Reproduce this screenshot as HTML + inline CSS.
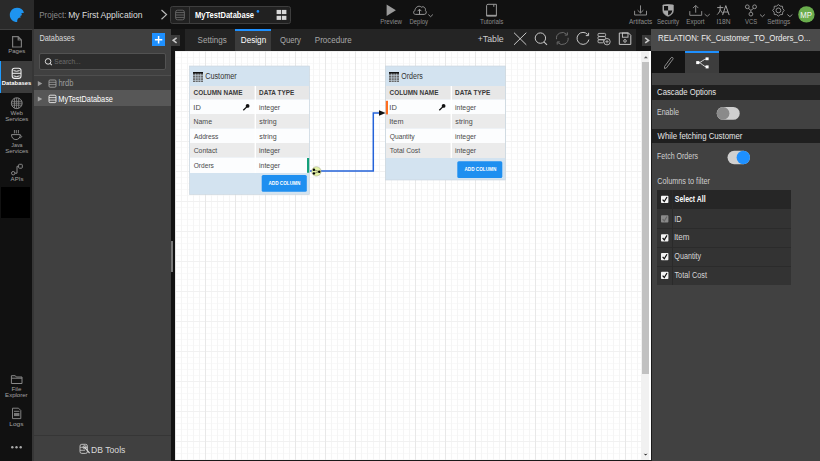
<!DOCTYPE html>
<html><head><meta charset="utf-8">
<title>Database Designer</title>
<style>
*{margin:0;padding:0;box-sizing:border-box}
html,body{width:820px;height:461px;overflow:hidden;background:#404040;font-family:"Liberation Sans",sans-serif;}
.a{position:absolute}
svg{position:absolute;left:0;top:0;font-family:"Liberation Sans",sans-serif}
.grid{background-color:#fff;
 background-image:linear-gradient(to right,#e8e8e8 1px,transparent 1px),linear-gradient(to bottom,#f1f1f1 1px,transparent 1px),linear-gradient(to right,#f5f5f5 1px,transparent 1px),linear-gradient(to bottom,#f9f9f9 1px,transparent 1px);
 background-size:30px 30px,30px 30px,6px 6px,6px 6px;background-position:0 0,0 0,0 0,0 0}
</style></head><body>
<!-- top header -->
<div class="a" style="left:0;top:0;width:820px;height:29px;background:#111"></div>
<div class="a" style="left:0;top:0;width:34px;height:29px;background:#2a2a2a"></div>
<!-- left icon bar -->
<div class="a" style="left:0;top:30px;width:32px;height:431px;background:#111"></div>
<div class="a" style="left:0;top:61px;width:32px;height:32px;background:#3c3c3c"></div>
<div class="a" style="left:0;top:61px;width:1px;height:32px;background:#1e9bff"></div>
<div class="a" style="left:1px;top:187px;width:29px;height:31px;background:#000"></div>
<!-- left panel -->
<div class="a" style="left:32px;top:29px;width:139px;height:432px;background:#404040;border-left:2px solid #363636"></div>
<div class="a" style="left:39px;top:53px;width:127px;height:17px;background:#2c2c2c;border:1px solid #525252;border-radius:2px"></div>
<div class="a" style="left:34px;top:75px;width:137px;height:1px;background:#4e4e4e"></div>
<div class="a" style="left:34px;top:76px;width:137px;height:14px;background:#3c3c3c"></div>
<div class="a" style="left:34px;top:90px;width:137px;height:16px;background:#575757"></div>
<div class="a" style="left:34px;top:435px;width:137px;height:1px;background:#363636"></div>
<div class="a" style="left:152px;top:33px;width:13px;height:13px;background:#1e90ff"></div>
<!-- splitter -->
<div class="a" style="left:171px;top:29px;width:4px;height:432px;background:#121212"></div>
<div class="a" style="left:171px;top:241px;width:2px;height:31px;background:#777"></div>
<!-- tab bar -->
<div class="a" style="left:171px;top:29px;width:480px;height:22px;background:#242424"></div>
<div class="a" style="left:171px;top:29px;width:14px;height:22px;background:#161616"></div>
<div class="a" style="left:171px;top:35px;width:9px;height:11px;background:#3a3a3a"></div>
<div class="a" style="left:235px;top:29px;width:36px;height:22px;background:#3b3b3b;border-top:2px solid #1e90ff"></div>
<div class="a" style="left:636px;top:29px;width:15px;height:22px;background:#161616"></div>
<div class="a" style="left:642px;top:35px;width:9px;height:11px;background:#3a3a3a"></div>
<!-- canvas -->
<div class="a grid" style="left:175px;top:51px;width:466px;height:410px"></div>
<div class="a" style="left:641px;top:51px;width:9px;height:410px;background:#f1f1f1"></div>
<div class="a" style="left:642px;top:62px;width:7px;height:312px;background:#c1c1c1"></div>
<div class="a" style="left:649px;top:51px;width:2px;height:410px;background:#fff"></div>
<div class="a" style="left:651px;top:51px;width:1px;height:410px;background:#1a1a1a"></div>
<div class="a" style="left:175px;top:460px;width:476px;height:1px;background:#1a1a1a"></div>
<!-- right panel -->
<div class="a" style="left:651px;top:29px;width:169px;height:22px;background:#4a4a4a"></div>
<div class="a" style="left:651px;top:51px;width:169px;height:22px;background:#141414"></div>
<div class="a" style="left:685px;top:51px;width:34px;height:22px;background:#3d3d3d;border-top:2px solid #1e90ff"></div>
<div class="a" style="left:652px;top:73px;width:168px;height:388px;background:#414141"></div>
<div class="a" style="left:652px;top:85px;width:168px;height:15px;background:#1f1f1f"></div>
<div class="a" style="left:652px;top:129px;width:168px;height:14px;background:#1f1f1f"></div>
<!-- filter table -->
<div class="a" style="left:657px;top:190px;width:134px;height:19px;background:#262626"></div>
<div class="a" style="left:657px;top:209px;width:134px;height:76px;background:#333"></div>
<div class="a" style="left:657px;top:228px;width:134px;height:1px;background:#2b2b2b"></div>
<div class="a" style="left:657px;top:247px;width:134px;height:1px;background:#2b2b2b"></div>
<div class="a" style="left:657px;top:266px;width:134px;height:1px;background:#2b2b2b"></div>
<div class="a" style="left:672px;top:190px;width:1px;height:95px;background:#2a2a2a"></div>

<svg width="820" height="461" viewBox="0 0 820 461">
<!-- ===== tables ===== -->
<g id="cust">
 <rect x="189.5" y="66" width="120" height="128.5" fill="#d3e3f0" stroke="#c9d4dc" stroke-width="0.6"/>
 <rect x="190" y="86" width="119" height="13.5" fill="#e7e7e7"/>
 <rect x="190" y="99.5" width="119" height="14.5" fill="#fff" fill-opacity="0.93"/>
 <rect x="190" y="114" width="119" height="14.5" fill="#ebebeb"/>
 <rect x="190" y="128.5" width="119" height="14.5" fill="#fff" fill-opacity="0.93"/>
 <rect x="190" y="143" width="119" height="14.5" fill="#ebebeb"/>
 <rect x="190" y="157.5" width="119" height="15.5" fill="#fff" fill-opacity="0.93"/>
 <rect x="254.6" y="86" width="1.4" height="87" fill="#fff"/>
 <rect x="261.7" y="175.1" width="45.1" height="16.6" rx="1.5" fill="#1e8ff0"/>
 <rect x="307" y="158" width="2.2" height="14.8" fill="#14a07a"/>
</g>
<g id="ord">
 <rect x="385.5" y="66" width="120" height="114" fill="#d3e3f0" stroke="#c9d4dc" stroke-width="0.6"/>
 <rect x="386" y="86" width="119" height="13.5" fill="#e7e7e7"/>
 <rect x="386" y="99.5" width="119" height="14.5" fill="#fff" fill-opacity="0.93"/>
 <rect x="386" y="114" width="119" height="14.5" fill="#ebebeb"/>
 <rect x="386" y="128.5" width="119" height="14.5" fill="#fff" fill-opacity="0.93"/>
 <rect x="386" y="143" width="119" height="15" fill="#ebebeb"/>
 <rect x="450.6" y="86" width="1.4" height="72" fill="#fff"/>
 <rect x="457.3" y="161.2" width="45" height="16.8" rx="1.5" fill="#1e8ff0"/>
 <rect x="385.8" y="100.8" width="2.2" height="13.6" fill="#ff6d1f"/>
</g>
<!-- table icons -->
<g>
 <rect x="193" y="72" width="10" height="10" fill="#666"/>
 <rect x="193" y="72" width="10" height="1.6" fill="#111"/>
 <path d="M193 75.3H203M193 77.9H203M193 80.4H203M195.6 73.6V82M198.1 73.6V82M200.6 73.6V82" stroke="#c4d2de" stroke-width="0.7"/>
 <rect x="389" y="72" width="10" height="10" fill="#666"/>
 <rect x="389" y="72" width="10" height="1.6" fill="#111"/>
 <path d="M389 75.3H399M389 77.9H399M389 80.4H399M391.6 73.6V82M394.1 73.6V82M396.6 73.6V82" stroke="#c4d2de" stroke-width="0.7"/>
 <!-- keys -->
 <circle cx="247.6" cy="105.9" r="1.9" fill="#111"/>
 <path d="M247 106.6L243.3 110.2" stroke="#111" stroke-width="1.3"/>
 <circle cx="443.6" cy="105.9" r="1.9" fill="#111"/>
 <path d="M443 106.6L439.3 110.2" stroke="#111" stroke-width="1.3"/>
</g>
<!-- relation line -->
<path d="M310 171.1H373.3V113H380" fill="none" stroke="#2563d9" stroke-width="1.5"/>
<path d="M379 110.2L385.6 113L379 115.8Z" fill="#111"/>
<circle cx="316.4" cy="171.4" r="4.7" fill="#e4f3a6" stroke="#9a9a8a" stroke-width="0.5"/>
<path d="M313.9 169.8L319.3 171.7L313.9 173.4" fill="none" stroke="#333" stroke-width="0.5"/>
<circle cx="313.9" cy="169.8" r="1.2" fill="#000"/>
<circle cx="313.9" cy="173.4" r="1.2" fill="#000"/>
<circle cx="319.3" cy="171.7" r="1.2" fill="#000"/>

<!-- ===== icons ===== -->
<!-- logo -->
<path d="M24 12.7C23 9.5 20.5 7.8 17 7.8C13 7.8 9.8 11 9.8 15C9.8 19 13 22.1 17.2 22.1C17.1 21 17.2 19.9 17.7 19.1C18.6 17.9 19.8 17.3 21 17.2C20.6 16.9 20.4 16.8 20.2 16.5C20.9 15.6 21.4 15.2 22.1 15.1C21.8 14.6 21.5 14.1 21.2 13.6C22 13 22.9 12.7 24 12.7Z" fill="#1e94f0"/>
<!-- pages -->
<path d="M12.6 36.6H18.2L21.4 40V47H12.6Z M18.2 36.6V40H21.4" fill="none" stroke="#7a7a7a" stroke-width="1.2"/>
<!-- databases -->
<rect x="12.2" y="68.2" width="8.8" height="10.2" rx="2.3" fill="none" stroke="#eeeeee" stroke-width="1.1"/>
<path d="M12.2 73.3H21M13.5 70.6Q16.6 71.9 19.7 70.6M13.5 75.9Q16.6 77.2 19.7 75.9" fill="none" stroke="#eeeeee" stroke-width="1"/>
<!-- globe -->
<circle cx="16.75" cy="103.2" r="5.4" fill="none" stroke="#888888" stroke-width="1"/>
<path d="M11.6 101.3H21.9M11.4 103.2H22.1M11.6 105.2H21.9M14.5 98.2V108.2M16.6 97.8V108.6M18.7 98.2V108.2" stroke="#888888" stroke-width="0.8"/>
<!-- java cup -->
<path d="M11.5 134.6H20.3C20.3 137.6 18.5 139.6 15.9 139.6C13.3 139.6 11.5 137.6 11.5 134.6Z M20.2 135.6C22.3 135.6 22.3 137.8 19.5 137.8" fill="none" stroke="#888888" stroke-width="1"/>
<path d="M14.4 130V133.4M16.3 130V133.4M18.4 130V133.4" stroke="#888888" stroke-width="0.9"/>
<!-- apis -->
<rect x="18.6" y="164.3" width="3.7" height="3.9" rx="0.8" fill="none" stroke="#888888" stroke-width="1"/>
<circle cx="13.2" cy="173.2" r="1.7" fill="none" stroke="#888888" stroke-width="1"/>
<path d="M14.9 173.2H17V166.3H18.6" fill="none" stroke="#888888" stroke-width="1"/>
<!-- file explorer -->
<path d="M11.4 383.5V375.7H15.3L16.3 377H22V383.5Z M11.4 378.2H22" fill="none" stroke="#888888" stroke-width="1"/>
<!-- logs -->
<path d="M12.5 408.2H18.5L20.8 410.5V418.6H12.5Z M14 411.3H19.4M14 413.6H19.4M14 414.6H19.4M14 415.6H19.4" fill="none" stroke="#888888" stroke-width="0.95"/>
<!-- dots -->
<circle cx="12.3" cy="447.3" r="1.2" fill="#aaa"/><circle cx="16.5" cy="447.3" r="1.2" fill="#aaa"/><circle cx="20.7" cy="447.3" r="1.2" fill="#aaa"/>
<!-- header chevron -->
<path d="M161.5 10L166.5 14.6L161.5 19.2" fill="none" stroke="#bbb" stroke-width="1.2"/>
<!-- selector box -->
<rect x="170.5" y="6.5" width="120" height="17" rx="2" fill="#212121" stroke="#3e3e3e" stroke-width="1"/>
<path d="M189.5 7V23" stroke="#3e3e3e" stroke-width="1"/>
<rect x="175.6" y="10.2" width="8.8" height="9.6" rx="2" fill="none" stroke="#6a6a6a" stroke-width="0.9"/>
<path d="M175.6 12.6H184.4M175.6 15H184.4M175.6 17.4H184.4" stroke="#6a6a6a" stroke-width="0.9"/>
<circle cx="257.9" cy="11.4" r="1.3" fill="#1e90ff"/>
<rect x="276.6" y="9.9" width="4.6" height="4.2" fill="#d8d8d8"/><rect x="282" y="9.9" width="4.4" height="4.2" fill="#d8d8d8"/>
<rect x="276.6" y="15.8" width="4.6" height="4.1" fill="#d8d8d8"/><rect x="282" y="15.8" width="4.4" height="4.1" fill="#d8d8d8"/>
<!-- preview -->
<path d="M386.6 4.4L395.9 10.3L386.6 16.1Z" fill="#9a9a9a"/>
<!-- deploy cloud -->
<path d="M415.5 14.4C413.3 14.4 412.9 11.2 415 10.6C414.9 7.4 418.8 4.8 421.5 7.2C423.4 5.9 426 7.8 425.4 10.5C426.9 11.7 426.4 14.4 424.3 14.4Z" fill="none" stroke="#9a9a9a" stroke-width="1"/>
<path d="M419.5 14.4V9.4M417.6 11.2L419.5 9.2L421.4 11.2" fill="none" stroke="#9a9a9a" stroke-width="1"/>
<path d="M428.3 14.5L430.6 16.7L432.9 14.5" fill="none" stroke="#9a9a9a" stroke-width="0.9"/>
<!-- tutorials book -->
<path d="M486.6 15.9V5.5C486.6 4.7 487.2 4.3 488 4.3H496.4V15.9H488C487.2 15.9 486.6 15.5 486.6 15.9Z" fill="none" stroke="#9a9a9a" stroke-width="1"/>
<path d="M486.6 15.6H496.4" stroke="#9a9a9a" stroke-width="1.6"/>
<path d="M493.8 4.3V6.8" stroke="#9a9a9a" stroke-width="1"/>
<!-- artifacts -->
<path d="M634.6 10.8V15H646.5V10.8" fill="none" stroke="#8a8a8a" stroke-width="1"/>
<path d="M640.5 5.4V13M637.6 10.2L640.5 13L643.4 10.2" fill="none" stroke="#8a8a8a" stroke-width="1"/>
<!-- security shield -->
<path d="M662.9 5V10.6C662.9 13.3 665.1 15.4 668.1 16.3C671.1 15.4 673.3 13.3 673.3 10.6V5L668.1 4.5Z" fill="#a9a9a9" stroke="#a9a9a9" stroke-width="0.7"/>
<path d="M664 6H668.1V10.5H664Z" fill="#111"/>
<path d="M668.1 10.5H672.3C672.1 12.8 670.5 14.4 668.1 15.2Z" fill="#111"/>
<!-- export -->
<path d="M689.8 11.1V15.3H701.7V11.1" fill="none" stroke="#8a8a8a" stroke-width="1"/>
<path d="M695.7 12.7V5.4M693 8.1L695.7 5.4L698.4 8.1" fill="none" stroke="#8a8a8a" stroke-width="1"/>
<path d="M704.6 14.1L707.2 16.3L709.8 14.1" fill="none" stroke="#8a8a8a" stroke-width="0.9"/>
<!-- i18n -->
<path d="M717.2 7.6H723.3M720.2 5.4V8.2C720.2 11 719 13 717.2 14.6M720.3 9.5C721 11.5 722 12.8 723.2 13.6" fill="none" stroke="#a0a0a0" stroke-width="1"/>
<path d="M722.6 15.1L725.8 5.6L729.2 15.1M723.7 12H728.1" fill="none" stroke="#a0a0a0" stroke-width="1"/>
<!-- vcs -->
<circle cx="747.3" cy="6.8" r="1.9" fill="none" stroke="#9a9a9a" stroke-width="0.9"/>
<circle cx="754.6" cy="6.8" r="1.9" fill="none" stroke="#9a9a9a" stroke-width="0.9"/>
<circle cx="750.9" cy="14.1" r="1.9" fill="none" stroke="#9a9a9a" stroke-width="0.9"/>
<path d="M748.3 8.4L750.9 10.3L753.6 8.4M750.9 10.3V12.2" fill="none" stroke="#9a9a9a" stroke-width="0.9"/>
<path d="M760 14.5L762.4 16.7L764.8 14.5" fill="none" stroke="#9a9a9a" stroke-width="0.9"/>
<!-- gear -->
<path d="M778.4 4.6L780.2 6.1L782.5 6.3L782.7 8.6L784.2 10.4L782.7 12.2L782.5 14.5L780.2 14.7L778.4 16.2L776.6 14.7L774.3 14.5L774.1 12.2L772.6 10.4L774.1 8.6L774.3 6.3L776.6 6.1Z" fill="none" stroke="#9a9a9a" stroke-width="0.9" stroke-linejoin="round"/>
<circle cx="778.4" cy="10.4" r="2.4" fill="none" stroke="#9a9a9a" stroke-width="0.9"/>
<path d="M787.4 14.5L789.9 16.7L792.4 14.5" fill="none" stroke="#9a9a9a" stroke-width="0.9"/>
<!-- avatar -->
<circle cx="806.4" cy="14.4" r="8.2" fill="#6aad4d"/>
<!-- panel: plus -->
<path d="M158.6 36V43.4M154.9 39.7H162.3" stroke="#fff" stroke-width="1.5"/>
<!-- search icon -->
<circle cx="48.1" cy="61.4" r="2.8" fill="none" stroke="#dcdcdc" stroke-width="1"/>
<path d="M50.1 63.4L51.8 65.1" stroke="#dcdcdc" stroke-width="1.1"/>
<!-- tree triangles -->
<path d="M37.8 81L42.3 83.6L37.8 86.2Z" fill="#9a9a9a"/>
<path d="M37.8 96.4L42.3 99L37.8 101.6Z" fill="#a8a8a8"/>
<!-- tree db icons -->
<rect x="49" y="80" width="7" height="7.2" rx="1.1" fill="none" stroke="#a0a0a0" stroke-width="0.9"/>
<path d="M49 82.3H56M49 84.6H56" stroke="#a0a0a0" stroke-width="0.8"/>
<rect x="49" y="95.2" width="7" height="7.4" rx="1.1" fill="none" stroke="#eeeeee" stroke-width="0.9"/>
<path d="M49 97.6H56M49 100.1H56" stroke="#eeeeee" stroke-width="0.8"/>
<!-- db tools -->
<rect x="80" y="444.3" width="7.4" height="9.1" rx="1.8" fill="none" stroke="#c8c8c8" stroke-width="0.9"/>
<path d="M80 447.3H87.4M80 450.3H85" stroke="#c8c8c8" stroke-width="0.8"/>
<path d="M84.2 446.8L89.6 453.2" stroke="#d8d8d8" stroke-width="1.2"/>
<circle cx="84.6" cy="447.2" r="1.6" fill="none" stroke="#d8d8d8" stroke-width="0.8"/>
<!-- collapse buttons -->
<path d="M176.6 37.8L173.2 40.3L176.6 42.8" fill="none" stroke="#c8c8c8" stroke-width="1.6"/>
<path d="M645.2 37.9L648.6 40.4L645.2 42.9" fill="none" stroke="#c8c8c8" stroke-width="1.6"/>
<!-- toolbar icons -->
<path d="M514 32.7L526.3 44.8M526.3 32.7L514 44.8" stroke="#c8c8c8" stroke-width="1"/>
<circle cx="540.4" cy="38.1" r="5.2" fill="none" stroke="#c8c8c8" stroke-width="1"/>
<path d="M543.9 41.8L547 44.8" stroke="#c8c8c8" stroke-width="1.1"/>
<path d="M556.5 39.2A5.9 5.9 0 0 1 566.6 34.3M568.1 37.8A5.9 5.9 0 0 1 558 42.7" fill="none" stroke="#6a6a6a" stroke-width="1"/>
<path d="M567.4 32.4V35.1H564.8M557.2 44.6V41.9H559.8" fill="none" stroke="#6a6a6a" stroke-width="1"/>
<path d="M587.7 34.6A6 6 0 1 0 588.9 39.6" fill="none" stroke="#c8c8c8" stroke-width="1"/>
<path d="M588.6 32.8V35.6H585.8" fill="none" stroke="#c8c8c8" stroke-width="1"/>
<rect x="598" y="33.4" width="7.6" height="3" rx="1" fill="none" stroke="#c0c0c0" stroke-width="0.9"/>
<rect x="598" y="36.6" width="7.6" height="3" rx="1" fill="none" stroke="#c0c0c0" stroke-width="0.9"/>
<rect x="598" y="39.8" width="5.5" height="3" rx="1" fill="none" stroke="#c0c0c0" stroke-width="0.9"/>
<circle cx="607" cy="41.7" r="3.2" fill="#242424" stroke="#c0c0c0" stroke-width="0.9"/>
<path d="M607 40V43.4M605.3 41.7H608.7" stroke="#c0c0c0" stroke-width="0.8"/>
<path d="M619.3 33H628.5L630.8 35.3V44.4H619.3Z" fill="none" stroke="#c8c8c8" stroke-width="1"/>
<rect x="622.4" y="33" width="5.6" height="4.2" fill="none" stroke="#c8c8c8" stroke-width="0.9"/>
<circle cx="625" cy="40.9" r="1.3" fill="none" stroke="#c8c8c8" stroke-width="0.9"/>
<!-- scrollbar arrows -->
<path d="M643.9 58.3L645.9 56.3L647.9 58.3Z" fill="#555"/>
<path d="M643.6 453.4L645.6 455.6L647.6 453.4L645.6 454.2Z" fill="#111"/>
<!-- right tab icons -->
<path d="M664.5 66.5L671 57.8C671.4 57.3 672.2 57.2 672.7 57.6C673.2 58 673.3 58.7 672.9 59.2L666.4 67.9L664.6 68.6Z" fill="none" stroke="#999" stroke-width="0.9"/>
<path d="M698.5 62.6C701.5 62.6 703.5 58.8 707.1 58.8M698.5 62.6C701.5 62.6 703.5 66.9 707.1 66.9" fill="none" stroke="#eee" stroke-width="0.9"/>
<rect x="696.2" y="61.1" width="3" height="3" fill="#fff"/>
<rect x="705.6" y="57.4" width="3" height="2.8" fill="#fff"/>
<rect x="705.6" y="65.4" width="3" height="3" fill="#fff"/>
<!-- toggles -->
<rect x="716.7" y="107" width="23" height="12.8" rx="6.4" fill="#cfcfcf"/>
<circle cx="723.1" cy="113.4" r="6.3" fill="#8a8a8a"/>
<rect x="727.5" y="150.8" width="22.5" height="13.4" rx="6.7" fill="#d0d0d0"/>
<circle cx="743.3" cy="157.5" r="6.7" fill="#1e90ff"/>
<!-- checkboxes -->
<g>
 <rect x="661" y="195.8" width="7.4" height="7.2" rx="0.8" fill="#f4f4f4"/>
 <path d="M662.6 199.6L664.3 201.5L667 197" fill="none" stroke="#111" stroke-width="1.2"/>
 <rect x="661" y="215.3" width="7.4" height="7.3" rx="0.8" fill="#8a8a8a"/>
 <path d="M662.6 219.1L664.3 221L667 216.5" fill="none" stroke="#666" stroke-width="1.2"/>
 <rect x="661" y="234.2" width="7.4" height="7.3" rx="0.8" fill="#f4f4f4"/>
 <path d="M662.6 238L664.3 239.9L667 235.4" fill="none" stroke="#111" stroke-width="1.2"/>
 <rect x="661" y="253" width="7.4" height="7.3" rx="0.8" fill="#f4f4f4"/>
 <path d="M662.6 256.8L664.3 258.7L667 254.2" fill="none" stroke="#111" stroke-width="1.2"/>
 <rect x="661" y="271.8" width="7.4" height="7.3" rx="0.8" fill="#f4f4f4"/>
 <path d="M662.6 275.6L664.3 277.5L667 273" fill="none" stroke="#111" stroke-width="1.2"/>
</g>
<!-- ===== texts ===== -->
<text x="39.15" y="17.80" font-size="9.01" fill="#8a8a8a" textLength="27.35" lengthAdjust="spacingAndGlyphs">Project:</text>
<text x="68.22" y="17.80" font-size="9.01" fill="#dedede" textLength="74.26" lengthAdjust="spacingAndGlyphs">My First Application</text>
<text x="194.95" y="17.80" font-size="8.58" fill="#ffffff" font-weight="700" textLength="59.15" lengthAdjust="spacingAndGlyphs">MyTestDatabase</text>
<text x="380.21" y="24.00" font-size="6.40" fill="#8c8c8c" textLength="21.74" lengthAdjust="spacingAndGlyphs">Preview</text>
<text x="409.53" y="24.00" font-size="6.40" fill="#8c8c8c" textLength="18.47" lengthAdjust="spacingAndGlyphs">Deploy</text>
<text x="479.88" y="24.10" font-size="6.40" fill="#8c8c8c" textLength="23.51" lengthAdjust="spacingAndGlyphs">Tutorials</text>
<text x="629.10" y="23.90" font-size="6.40" fill="#8c8c8c" textLength="23.09" lengthAdjust="spacingAndGlyphs">Artifacts</text>
<text x="656.95" y="23.90" font-size="6.40" fill="#8c8c8c" textLength="22.15" lengthAdjust="spacingAndGlyphs">Security</text>
<text x="686.29" y="23.90" font-size="6.40" fill="#8c8c8c" textLength="18.29" lengthAdjust="spacingAndGlyphs">Export</text>
<text x="716.40" y="24.10" font-size="6.40" fill="#8c8c8c" textLength="14.08" lengthAdjust="spacingAndGlyphs">I18N</text>
<text x="745.00" y="24.10" font-size="6.40" fill="#8c8c8c" textLength="12.22" lengthAdjust="spacingAndGlyphs">VCS</text>
<text x="767.25" y="24.10" font-size="6.40" fill="#8c8c8c" textLength="22.94" lengthAdjust="spacingAndGlyphs">Settings</text>
<text x="800.18" y="17.80" font-size="8.21" fill="#f4f4f4" textLength="11.69" lengthAdjust="spacingAndGlyphs">MP</text>
<text x="8.22" y="53.30" font-size="6.25" fill="#a2a2a2" textLength="17.06" lengthAdjust="spacingAndGlyphs">Pages</text>
<text x="1.85" y="85.00" font-size="6.18" fill="#ffffff" font-weight="700" textLength="29.36" lengthAdjust="spacingAndGlyphs">Databases</text>
<text x="10.60" y="114.90" font-size="6.25" fill="#a2a2a2" textLength="12.42" lengthAdjust="spacingAndGlyphs">Web</text>
<text x="5.16" y="120.60" font-size="6.25" fill="#a2a2a2" textLength="23.22" lengthAdjust="spacingAndGlyphs">Services</text>
<text x="11.25" y="147.30" font-size="6.25" fill="#a2a2a2" textLength="11.33" lengthAdjust="spacingAndGlyphs">Java</text>
<text x="5.16" y="153.00" font-size="6.25" fill="#a2a2a2" textLength="23.22" lengthAdjust="spacingAndGlyphs">Services</text>
<text x="10.60" y="181.10" font-size="6.25" fill="#a2a2a2" textLength="12.88" lengthAdjust="spacingAndGlyphs">APIs</text>
<text x="11.51" y="391.30" font-size="6.25" fill="#a2a2a2" textLength="9.91" lengthAdjust="spacingAndGlyphs">File</text>
<text x="5.12" y="397.30" font-size="6.25" fill="#a2a2a2" textLength="22.46" lengthAdjust="spacingAndGlyphs">Explorer</text>
<text x="9.38" y="425.80" font-size="6.25" fill="#a2a2a2" textLength="14.12" lengthAdjust="spacingAndGlyphs">Logs</text>
<text x="39.41" y="41.00" font-size="9.16" fill="#dcdcdc" textLength="35.21" lengthAdjust="spacingAndGlyphs">Databases</text>
<text x="54.34" y="64.30" font-size="7.56" fill="#6c6c6c" textLength="26.13" lengthAdjust="spacingAndGlyphs">Search...</text>
<text x="58.45" y="85.90" font-size="8.58" fill="#9c9c9c" textLength="15.02" lengthAdjust="spacingAndGlyphs">hrdb</text>
<text x="58.31" y="102.00" font-size="8.58" fill="#ffffff" textLength="54.65" lengthAdjust="spacingAndGlyphs">MyTestDatabase</text>
<text x="91.12" y="452.60" font-size="9.59" fill="#dadada" textLength="34.24" lengthAdjust="spacingAndGlyphs">DB Tools</text>
<text x="197.58" y="42.80" font-size="8.58" fill="#a8a8a8" textLength="29.17" lengthAdjust="spacingAndGlyphs">Settings</text>
<text x="240.85" y="42.80" font-size="8.58" fill="#ffffff" textLength="25.31" lengthAdjust="spacingAndGlyphs">Design</text>
<text x="279.89" y="42.80" font-size="8.58" fill="#a8a8a8" textLength="21.11" lengthAdjust="spacingAndGlyphs">Query</text>
<text x="314.86" y="42.80" font-size="8.58" fill="#a8a8a8" textLength="36.83" lengthAdjust="spacingAndGlyphs">Procedure</text>
<text x="477.65" y="42.00" font-size="8.58" fill="#cccccc" textLength="26.07" lengthAdjust="spacingAndGlyphs">+Table</text>
<text x="205.13" y="78.70" font-size="8.28" fill="#333333" textLength="31.66" lengthAdjust="spacingAndGlyphs">Customer</text>
<text x="193.54" y="95.00" font-size="7.12" fill="#3a3a3a" font-weight="700" textLength="48.89" lengthAdjust="spacingAndGlyphs">COLUMN NAME</text>
<text x="259.12" y="95.00" font-size="7.12" fill="#3a3a3a" font-weight="700" textLength="35.12" lengthAdjust="spacingAndGlyphs">DATA TYPE</text>
<text x="193.33" y="109.60" font-size="7.70" fill="#4a4a4a" textLength="7.49" lengthAdjust="spacingAndGlyphs">ID</text>
<text x="259.09" y="109.60" font-size="7.70" fill="#4a4a4a" textLength="21.00" lengthAdjust="spacingAndGlyphs">integer</text>
<text x="193.44" y="124.10" font-size="7.70" fill="#4a4a4a" textLength="18.61" lengthAdjust="spacingAndGlyphs">Name</text>
<text x="259.36" y="124.10" font-size="7.70" fill="#4a4a4a" textLength="17.24" lengthAdjust="spacingAndGlyphs">string</text>
<text x="194.00" y="138.60" font-size="7.70" fill="#4a4a4a" textLength="24.40" lengthAdjust="spacingAndGlyphs">Address</text>
<text x="259.36" y="138.60" font-size="7.70" fill="#4a4a4a" textLength="17.24" lengthAdjust="spacingAndGlyphs">string</text>
<text x="193.66" y="153.10" font-size="7.70" fill="#4a4a4a" textLength="23.58" lengthAdjust="spacingAndGlyphs">Contact</text>
<text x="259.09" y="153.10" font-size="7.70" fill="#4a4a4a" textLength="21.00" lengthAdjust="spacingAndGlyphs">integer</text>
<text x="193.74" y="167.60" font-size="7.70" fill="#4a4a4a" textLength="20.16" lengthAdjust="spacingAndGlyphs">Orders</text>
<text x="259.09" y="167.60" font-size="7.70" fill="#4a4a4a" textLength="21.00" lengthAdjust="spacingAndGlyphs">integer</text>
<text x="268.51" y="184.90" font-size="5.38" fill="#ffffff" font-weight="700" textLength="31.78" lengthAdjust="spacingAndGlyphs">ADD COLUMN</text>
<text x="401.22" y="78.70" font-size="8.28" fill="#333333" textLength="21.59" lengthAdjust="spacingAndGlyphs">Orders</text>
<text x="389.54" y="95.00" font-size="7.12" fill="#3a3a3a" font-weight="700" textLength="48.89" lengthAdjust="spacingAndGlyphs">COLUMN NAME</text>
<text x="455.12" y="95.00" font-size="7.12" fill="#3a3a3a" font-weight="700" textLength="35.12" lengthAdjust="spacingAndGlyphs">DATA TYPE</text>
<text x="389.33" y="109.60" font-size="7.70" fill="#4a4a4a" textLength="7.49" lengthAdjust="spacingAndGlyphs">ID</text>
<text x="455.09" y="109.60" font-size="7.70" fill="#4a4a4a" textLength="21.00" lengthAdjust="spacingAndGlyphs">integer</text>
<text x="389.35" y="124.10" font-size="7.70" fill="#4a4a4a" textLength="14.11" lengthAdjust="spacingAndGlyphs">Item</text>
<text x="455.36" y="124.10" font-size="7.70" fill="#4a4a4a" textLength="17.24" lengthAdjust="spacingAndGlyphs">string</text>
<text x="389.73" y="138.60" font-size="7.70" fill="#4a4a4a" textLength="24.97" lengthAdjust="spacingAndGlyphs">Quantity</text>
<text x="455.09" y="138.60" font-size="7.70" fill="#4a4a4a" textLength="21.00" lengthAdjust="spacingAndGlyphs">integer</text>
<text x="389.86" y="153.10" font-size="7.70" fill="#4a4a4a" textLength="30.32" lengthAdjust="spacingAndGlyphs">Total Cost</text>
<text x="455.09" y="153.10" font-size="7.70" fill="#4a4a4a" textLength="21.00" lengthAdjust="spacingAndGlyphs">integer</text>
<text x="464.51" y="170.60" font-size="5.38" fill="#ffffff" font-weight="700" textLength="31.78" lengthAdjust="spacingAndGlyphs">ADD COLUMN</text>
<text x="658.07" y="41.00" font-size="9.16" fill="#eeeeee" textLength="152.32" lengthAdjust="spacingAndGlyphs">RELATION: FK_Customer_TO_Orders_O...</text>
<text x="657.11" y="94.80" font-size="8.28" fill="#e6e6e6" textLength="59.12" lengthAdjust="spacingAndGlyphs">Cascade Options</text>
<text x="656.93" y="114.90" font-size="8.43" fill="#d0d0d0" textLength="22.13" lengthAdjust="spacingAndGlyphs">Enable</text>
<text x="657.60" y="139.10" font-size="8.43" fill="#e6e6e6" textLength="84.80" lengthAdjust="spacingAndGlyphs">While fetching Customer</text>
<text x="657.04" y="158.90" font-size="8.43" fill="#d0d0d0" textLength="40.97" lengthAdjust="spacingAndGlyphs">Fetch Orders</text>
<text x="657.24" y="184.00" font-size="8.43" fill="#d0d0d0" textLength="52.66" lengthAdjust="spacingAndGlyphs">Columns to filter</text>
<text x="674.86" y="202.00" font-size="8.28" fill="#ffffff" font-weight="700" textLength="30.70" lengthAdjust="spacingAndGlyphs">Select All</text>
<text x="674.13" y="221.60" font-size="8.28" fill="#d6d6d6" textLength="7.49" lengthAdjust="spacingAndGlyphs">ID</text>
<text x="673.88" y="240.00" font-size="8.28" fill="#d6d6d6" textLength="15.63" lengthAdjust="spacingAndGlyphs">Item</text>
<text x="674.31" y="259.00" font-size="8.28" fill="#d6d6d6" textLength="26.79" lengthAdjust="spacingAndGlyphs">Quantity</text>
<text x="674.45" y="277.60" font-size="8.28" fill="#d6d6d6" textLength="32.53" lengthAdjust="spacingAndGlyphs">Total Cost</text>
</svg>
</body></html>
